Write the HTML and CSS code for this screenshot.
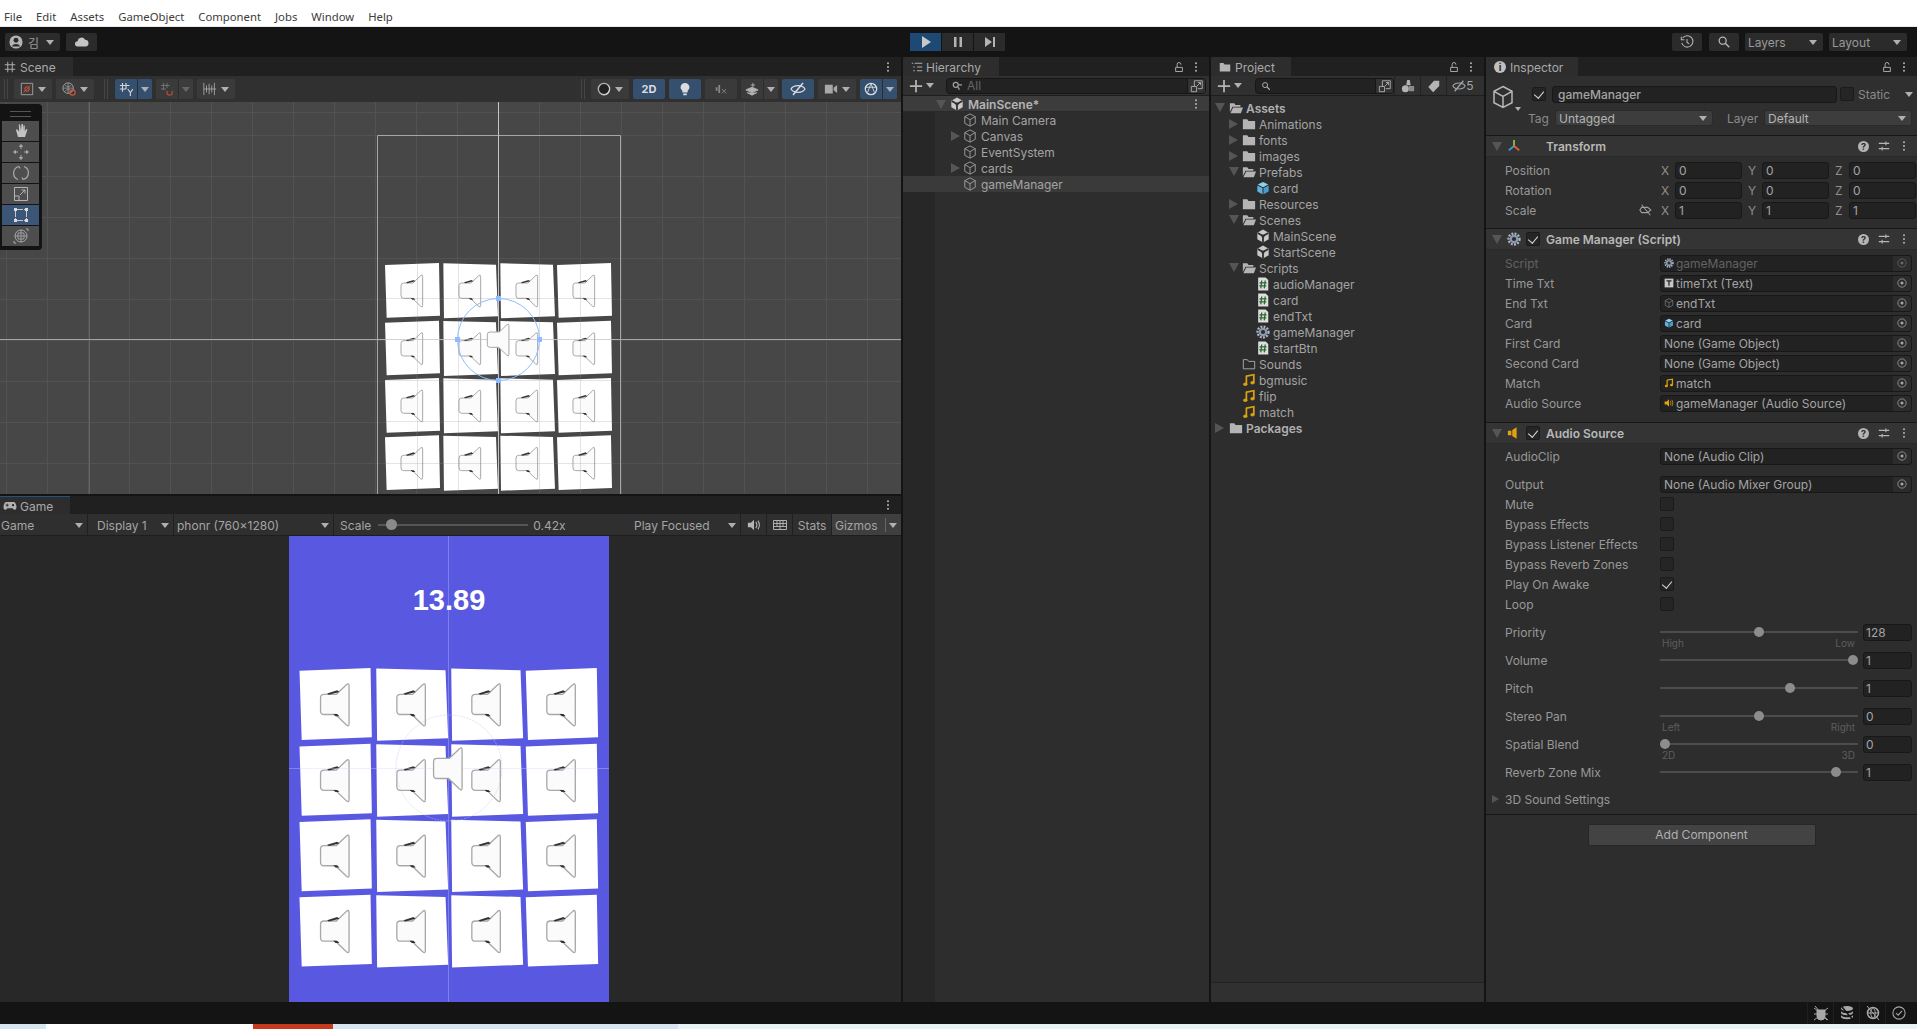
FILE: index.html
```html
<!DOCTYPE html>
<html lang="en">
<head>
  <meta charset="UTF-8">
  <title>Unity Editor</title>
  <link rel="stylesheet" href="styles.css">
</head>
<body>

  <!-- Icons used all over the editor -->
  <svg class="sprite" width="0" height="0">
    <symbol id="i-cube" viewBox="0 0 16 16"><path d="M8 1 14 4.2V11.8L8 15 2 11.8V4.2ZM2 4.2 8 7.6 14 4.2M8 7.6V15" fill="none" stroke="currentColor" stroke-width="1"/></symbol>
    <symbol id="i-prefab" viewBox="0 0 16 16"><path d="M8 1 14 4 8 7 2 4Z" fill="#8ed0ee"/><path d="M1.5 5 7.4 8V15L1.5 12Z" fill="#5fb2dd"/><path d="M14.500 5 8.600 8V15L14.500 12Z" fill="#4a9bc8"/></symbol>
    <symbol id="i-unity" viewBox="0 0 16 16"><path d="M8 .6 14.500 4.200V11.800L8 15.400 1.500 11.800V4.200Z" fill="#c9c9c9"/><path d="M8 8V15M8 8 2 4.500M8 8 14 4.500" stroke="#2c2c2c" stroke-width="2"/><circle cx="8" cy="8" r="1.800" fill="#2c2c2c"/></symbol>
    <symbol id="i-folder" viewBox="0 0 16 16"><path d="M1 2.500H6L7.500 4.500H15V14H1Z" fill="#b4b4b4"/></symbol>
    <symbol id="i-folder-open" viewBox="0 0 16 16"><path d="M1 2.500H6L7.500 4.500H13V6.500H4L1 12.500Z" fill="#b4b4b4"/><path d="M4.800 7.500H16L13.500 14H1.600Z" fill="#b4b4b4"/></symbol>
    <symbol id="i-folder-line" viewBox="0 0 16 16"><path d="M1.500 3H6L7.500 5H14.500V13.500H1.500Z" fill="none" stroke="#b4b4b4"/></symbol>
    <symbol id="i-note" viewBox="0 0 16 16"><path d="M5 3.500 13.500 2V11" fill="none" stroke="#d9a00c" stroke-width="2"/><path d="M5 3V12.500" stroke="#d9a00c" stroke-width="2"/><ellipse cx="3.800" cy="12.800" rx="2.500" ry="2" fill="#d9a00c"/><ellipse cx="12" cy="11.200" rx="2.500" ry="2" fill="#d9a00c"/></symbol>
    <symbol id="i-script" viewBox="0 0 16 16"><path d="M2.500 .5H11L14 3.500V15.500H2.500Z" fill="#dedede"/><path d="M6.500 4 5.500 13M10.500 4 9.500 13M4 6.800H12M3.800 10.200H11.800" stroke="#2a6b33" stroke-width="1.500"/></symbol>
    <symbol id="i-gear" viewBox="0 0 16 16"><circle cx="8" cy="8" r="6.300" fill="none" stroke="#aeb8c8" stroke-width="2.600" stroke-dasharray="2.200 1.500"/><circle cx="8" cy="8" r="5" fill="#8b98ad"/><circle cx="8" cy="8" r="2.400" fill="#2c2c2c"/></symbol>
    <symbol id="i-kebab" viewBox="0 0 16 16"><circle cx="8" cy="3" r="1.300" fill="#b4b4b4"/><circle cx="8" cy="8" r="1.300" fill="#b4b4b4"/><circle cx="8" cy="13" r="1.300" fill="#b4b4b4"/></symbol>
    <symbol id="i-lock" viewBox="0 0 16 16"><path d="M3.500 8.500H12.500V14H3.500ZM5.500 8.500V4.500A2.500 2.500 0 0 1 10.500 4.500V5" fill="none" stroke="#b4b4b4" stroke-width="1.200"/></symbol>
    <symbol id="i-sliders" viewBox="0 0 16 16"><path d="M1 4.500H15M1 11.500H15M10.500 2V7M5.500 9V14" stroke="#b4b4b4" stroke-width="1.500"/></symbol>
    <symbol id="i-target" viewBox="0 0 16 16"><circle cx="8" cy="8" r="5.500" fill="none" stroke="#a8a8a8"/><circle cx="8" cy="8" r="2" fill="#a8a8a8"/></symbol>
    <symbol id="i-plus" viewBox="0 0 16 16"><path d="M8 1V15M1 8H15" stroke="#b4b4b4" stroke-width="2"/></symbol>
    <symbol id="i-speaker" viewBox="0 0 16 16"><path d="M1 5.500H4.500L8 2V14L4.500 10.500H1Z" fill="currentColor"/><path d="M10 4.500C11.500 6.500 11.500 9.500 10 11.500M12.500 3C14.500 6 14.500 10 12.500 13" fill="none" stroke="currentColor" stroke-width="1.200"/></symbol>
    <symbol id="i-search" viewBox="0 0 16 16"><circle cx="6.500" cy="6.500" r="4" fill="none" stroke="#b4b4b4" stroke-width="1.500"/><path d="M9.500 9.500 14 14" stroke="#b4b4b4" stroke-width="1.700"/></symbol>
    <symbol id="i-popout" viewBox="0 0 16 16"><path d="M5 9V2H14V11H9M1.500 8.500H7.500V14.500H1.500ZM8 8 12 4M9 4H12V7" fill="none" stroke="#b4b4b4"/></symbol>
    <symbol id="i-hidden" viewBox="0 0 16 16"><path d="M1 8C3.500 3.500 12.500 3.500 15 8 12.500 12.500 3.500 12.500 1 8Z" fill="none" stroke="currentColor" stroke-width="1.200"/><path d="M13 2 3 14" stroke="currentColor" stroke-width="1.500"/></symbol>
    <symbol id="i-unlink" viewBox="0 0 16 16"><path d="M3 5H10L13.500 8 10 11H3L1 8ZM3 2 13 14" fill="none" stroke="#a0a0a0" stroke-width="1.200"/></symbol>
    <symbol id="i-cam" viewBox="0 0 16 16"><path d="M1 3H10V13H1ZM11 6.500 15 3.500V12.500L11 9.500Z" fill="#a8a8a8"/></symbol>

    <!-- A card from the scene, drawn in zoomed units -->
    <symbol id="speaker" viewBox="0 0 165 165" overflow="visible">
      <path d="M56 60H84L107 38Q113 33 113 41V127Q113 135 107 130L82 106H56Q48 106 48 98V68Q48 60 56 60Z" fill="#fbfbfb" stroke="#a8a8a8" stroke-width="3"/>
    </symbol>
    <g id="card-a">
      <path d="M0 6 162 0 165 158 5 164Z" fill="#fff"/>
      <use href="#speaker" width="165" height="165"/>
      <path d="M63 58 86 51 91 55 67 61ZM77 105H86L91 110H82Z" fill="#333"/>
    </g>
    <g id="card-b">
      <path d="M1 1 159 5 165 160 3 166Z" fill="#fff"/>
      <use href="#speaker" width="165" height="165"/>
      <path d="M63 58 86 51 91 55 67 61ZM77 105H86L91 110H82Z" fill="#333"/>
    </g>
    <g id="card-row">
      <use href="#card-a"/>
      <use href="#card-b" x="174"/>
      <use href="#card-b" x="345"/>
      <use href="#card-a" x="516"/>
    </g>
    <g id="card-grid">
      <use href="#card-row"/>
      <use href="#card-row" y="173"/>
      <use href="#card-row" y="345"/>
      <use href="#card-row" y="517"/>
    </g>
  </svg>

  <div class="menubar">
    <span>File</span><span>Edit</span><span>Assets</span><span>GameObject</span><span>Component</span><span>Jobs</span><span>Window</span><span>Help</span>
  </div>

  <!-- Main toolbar -->
  <div class="main-toolbar">
    <div class="mt-btn account">
      <svg class="ic14" viewBox="0 0 16 16"><circle cx="8" cy="8" r="7.500" fill="#b4b4b4"/><circle cx="8" cy="6" r="2.800" fill="#2b2b2b"/><path d="M3.500 13C4.500 9.500 11.500 9.500 12.500 13Z" fill="#2b2b2b"/></svg>
      <span class="kr">김</span><i class="arrow-down"></i>
    </div>
    <div class="mt-btn cloud">
      <svg class="ic14" viewBox="0 0 16 16"><path d="M3 13A3 3 0 0 1 3 7 4.500 4.500 0 0 1 11.500 5.500 3.800 3.800 0 0 1 12.500 13Z" fill="#c4c4c4"/></svg>
    </div>
    <div class="play-group">
      <div class="mt-btn play active"><svg class="ic12" viewBox="0 0 12 12"><path d="M2 0 11 6 2 12Z" fill="#c8c8c8"/></svg></div>
      <div class="mt-btn play"><svg class="ic12" viewBox="0 0 12 12"><path d="M2 1H4.500V11H2ZM7.500 1H10V11H7.500Z" fill="#b4b4b4"/></svg></div>
      <div class="mt-btn play"><svg class="ic12" viewBox="0 0 12 12"><path d="M1 1 8 6 1 11ZM9 1H11V11H9Z" fill="#b4b4b4"/></svg></div>
    </div>
    <div class="mt-right">
      <div class="mt-btn icon-btn"><svg class="ic14" viewBox="0 0 16 16"><path d="M3 3.500A6.500 6.500 0 1 1 2 9M8 4.500V8.500L10.500 10M1.500 2V5.500H5" fill="none" stroke="#b4b4b4" stroke-width="1.200"/></svg></div>
      <div class="mt-btn icon-btn"><svg class="ic14"><use href="#i-search"/></svg></div>
      <div class="mt-btn text-btn">Layers<i class="arrow-down"></i></div>
      <div class="mt-btn text-btn">Layout<i class="arrow-down"></i></div>
    </div>
  </div>

  <div class="dock">

    <!-- Scene and Game -->
    <div class="col-views">
      <div class="panel scene-panel">
        <div class="tabbar">
          <div class="tab tab-scene">
            <svg class="ic12" viewBox="0 0 16 16"><path d="M5 1V15M11 1V15M1 5H15M1 11H15" stroke="#b0b0b0" stroke-width="1.300"/></svg>Scene
          </div>
          <svg class="ic12 kebab"><use href="#i-kebab"/></svg>
        </div>
        <div class="scene-toolbar">
          <span class="grip"></span>
          <div class="tb-btn w38"><svg class="ic14" viewBox="0 0 16 16"><path d="M1.500 1.500H14.500V14.500H1.500Z" fill="none" stroke="#a8a8a8"/><path d="M4 12 12 4" stroke="#d0543a"/><circle cx="8" cy="8" r="2.500" fill="none" stroke="#d0543a" stroke-width="1.200"/></svg><i class="arrow-down"></i></div>
          <div class="tb-btn w38"><svg class="ic14" viewBox="0 0 16 16"><circle cx="7" cy="7" r="6" fill="none" stroke="#a8a8a8"/><path d="M1 7H13M7 1V13M3 3C5 6 9 6 11 3M3 11C5 8 9 8 11 11" fill="none" stroke="#a8a8a8" stroke-width=".8"/><circle cx="12" cy="12" r="3" fill="none" stroke="#d0543a" stroke-width="1.300"/></svg><i class="arrow-down"></i></div>
          <span class="grip grip-mid"></span>
          <div class="tb-split on">
            <div class="part-icon"><svg class="ic14" viewBox="0 0 16 16"><path d="M4 1V11M8 1V8M1 4H12M1 8H8M10 8 13 12 16 8M13 12V16" fill="none" stroke="#d4d4d4" stroke-width="1.300"/></svg></div>
            <div class="part-arrow"><i class="arrow-down"></i></div>
          </div>
          <div class="tb-split dim">
            <div class="part-icon"><svg class="ic14" viewBox="0 0 16 16"><path d="M4 1V9M8 1V7M1 4H11M1 8H7" stroke="#777"/><path d="M8 10V12A3 3 0 0 0 14 12V10" fill="none" stroke="#a84d33" stroke-width="1.500"/></svg></div>
            <div class="part-arrow"><i class="arrow-down"></i></div>
          </div>
          <div class="tb-btn w38"><svg class="ic14" viewBox="0 0 16 16"><path d="M1 1V15M4 4V12M7 2V14M10 4V12M13 1V15M1 8H15" stroke="#a8a8a8"/></svg><i class="arrow-down"></i></div>
          <span class="grip grip-right"></span>
          <div class="tb-btn w38 first-right"><svg class="ic14" viewBox="0 0 16 16"><circle cx="8" cy="8" r="6.500" fill="#222" stroke="#b8b8b8" stroke-width="1.500"/><path d="M12 3A6 6 0 0 1 4 14 7 7 0 0 0 12 3Z" fill="#d4d4d4"/></svg><i class="arrow-down"></i></div>
          <div class="tb-btn w32 on btn-2d">2D</div>
          <div class="tb-btn w32 on"><svg class="ic14" viewBox="0 0 16 16"><path d="M8 1A5 5 0 0 1 11 10V12H5V10A5 5 0 0 1 8 1ZM6 13H10V15H6Z" fill="#dcdcdc"/></svg></div>
          <div class="tb-btn w32"><svg class="ic14" viewBox="0 0 16 16"><path d="M2 6H4V10H2ZM5 3.500H7V12.500H5Z" fill="#888"/><path d="M9 8 14 13M14 8 9 13" stroke="#888"/></svg></div>
          <div class="tb-split w37">
            <div class="part-icon"><svg class="ic14" viewBox="0 0 16 16"><path d="M1 9 8 6 15 9 8 12ZM2 12 8 15 14 12M9 1V6M6.500 3.500H11.500" fill="#b4b4b4" stroke="#b4b4b4"/></svg></div>
            <div class="part-arrow"><i class="arrow-down"></i></div>
          </div>
          <div class="tb-btn w32 on eye"><svg class="ic16"><use href="#i-hidden"/></svg></div>
          <div class="tb-btn w38"><svg class="ic14"><use href="#i-cam"/></svg><i class="arrow-down"></i></div>
          <div class="tb-split w37 on">
            <div class="part-icon"><svg class="ic14" viewBox="0 0 16 16"><circle cx="8" cy="8" r="6.500" fill="none" stroke="#dcdcdc" stroke-width="1.500"/><path d="M2 6H14M8 2 4 12M8 2 12 12" fill="none" stroke="#dcdcdc"/></svg></div>
            <div class="part-arrow"><i class="arrow-down"></i></div>
          </div>
        </div>

        <div class="scene-view">
          <svg class="overlay" width="901" height="392">
            <g transform="translate(0 -102)">
              <path d="M89.500 102V494" stroke="#656565"/>
              <path d="M377.500 494V135.500H620.500V494" fill="none" stroke="#a6a6a6"/>
              <path d="M0 339.500H901" stroke="#a4a4a4"/>
              <path d="M498.500 102V494" stroke="#c4c4c4"/>
              <use href="#card-grid" transform="translate(385 263) scale(.3333)"/>
              <path d="M417.500 263V490M458.500 263V490M539.500 263V490M580.500 263V490M385 298.500H612M385 380.500H612M385 421.500H612M385 463.500H612" stroke="#787878" stroke-opacity=".2"/>
              <path d="M377 339.500H620" stroke="#b5b5b5" stroke-opacity=".6"/>
              <circle cx="498.500" cy="339.500" r="41" fill="none" stroke="#8fbcff" stroke-width="1"/>
              <use href="#speaker" x="471.300" y="312" width="55" height="55"/>
              <path d="M496 296H501V301H496ZM496 378H501V383H496ZM455 337H460V342H455ZM537 337H542V342H537Z" fill="#8fbcff"/>
            </g>
          </svg>

          <div class="toolbox">
            <div class="toolbox-grip"></div>
            <div class="tool"><svg class="ic16" viewBox="0 0 16 16"><path d="M3 7 5 14H12L14.500 6.500 13 6 11.800 8.500V2.500L10.500 2.500 10 7.500V1H8.500L8 7.500 7 1.500H5.800L6.200 8.800 4 6Z" fill="#c4c4c4"/></svg></div>
            <div class="tool"><svg class="ic16" viewBox="0 0 16 16"><path d="M8 1V5M8 11V15M1 8H5M11 8H15M8 .5 6.500 2.500H9.500ZM8 15.500 6.500 13.500H9.500ZM.5 8 2.500 6.500V9.500ZM15.500 8 13.500 6.500V9.500Z" fill="#a8a8a8" stroke="#a8a8a8"/></svg></div>
            <div class="tool"><svg class="ic16" viewBox="0 0 16 16"><path d="M6 1.500A6.800 6.800 0 0 0 5 14.500M10 14.500A6.800 6.800 0 0 0 11 1.500M6 1.500 7 3.500M10 14.500 9 12.500" fill="none" stroke="#a8a8a8" stroke-width="1.200"/></svg></div>
            <div class="tool"><svg class="ic16" viewBox="0 0 16 16"><path d="M1.500 1.500H14.500V14.500H1.500ZM1.500 10H6V14.500M7 9 12 4M8.500 4H12V7.500" fill="none" stroke="#b4b4b4"/></svg></div>
            <div class="tool on"><svg class="ic16" viewBox="0 0 16 16"><path d="M3 2.500H13M3 13.500H13M2.500 3V13M13.500 3V13" stroke="#c8c8c8" stroke-dasharray="7 1"/><path d="M1 1H4V4H1ZM12 1H15V4H12ZM1 12H4V15H1ZM12 12H15V15H12Z" fill="#dcdcdc"/></svg></div>
            <div class="tool"><svg class="ic16" viewBox="0 0 16 16"><circle cx="8" cy="8" r="6" fill="none" stroke="#a8a8a8"/><path d="M8 2V14M2 8H14M5 5H11V11H5Z" fill="none" stroke="#a8a8a8" stroke-width=".9"/><path d="M13 1H15V3M3 15H1V13" fill="none" stroke="#a8a8a8"/></svg></div>
          </div>
        </div>
      </div>

      <div class="panel game-panel">
        <div class="tabbar game-tabbar">
          <div class="tab tab-game">
            <svg class="ic14" viewBox="0 0 16 16"><path d="M4 3.500H12C15 3.500 16 9 15 11.500 14 13 12.500 12.500 11 10.500H5C3.500 12.500 2 13 1 11.500 0 9 1 3.500 4 3.500Z" fill="#b0b0b0"/><path d="M3 7H6.500M4.800 5.300V8.700" stroke="#222"/><circle cx="11.500" cy="7" r="1.200" fill="#222"/></svg>Game
          </div>
          <svg class="ic12 kebab"><use href="#i-kebab"/></svg>
        </div>
        <div class="game-toolbar">
          <div class="gt-item gt-game">Game<i class="arrow-down"></i></div>
          <div class="gt-item gt-display">Display 1<i class="arrow-down"></i></div>
          <div class="gt-item gt-res">phonr (760x1280)<i class="arrow-down"></i></div>
          <div class="gt-item gt-scale">
            Scale
            <div class="mini-slider"><span class="mini-thumb"></span></div>
            <span>0.42x</span>
          </div>
          <div class="gt-item gt-focus">Play Focused<i class="arrow-down"></i></div>
          <div class="gt-item gt-icon"><svg class="ic14 speaker-ic"><use href="#i-speaker"/></svg></div>
          <div class="gt-item gt-icon"><svg class="ic16" viewBox="0 0 16 16"><path d="M1.500 3.500H14.500V12.500H1.500ZM1.500 6.500H14.500M1.500 9.500H14.500M5 3.500V9.500M8 3.500V12.500M11 3.500V9.500" fill="none" stroke="#b0b0b0"/></svg></div>
          <div class="gt-item gt-stats">Stats</div>
          <div class="gt-item gt-gizmos">Gizmos<span class="gizmo-sep"></span><i class="arrow-down"></i></div>
        </div>
        <div class="game-view">
          <div class="game-screen">
            <svg class="overlay" width="320" height="466">
              <g transform="translate(-289 -536)">
                <path d="M448.500 536V1002" stroke="#7c80ec"/>
                <use href="#card-grid" transform="translate(299.500 668) scale(.4385)"/>
                <path d="M289 768.500H609" stroke="#cfd8fa" stroke-opacity=".35"/>
                <circle cx="449" cy="768" r="53" fill="none" stroke="#b9c9f5" stroke-opacity=".5" stroke-dasharray="2 1"/>
                <use href="#speaker" x="412.500" y="732" width="72.400" height="72.400"/>
              </g>
            </svg>
            <div class="timer">13.89</div>
          </div>
        </div>
      </div>
    </div>

    <!-- Hierarchy -->
    <div class="panel hierarchy">
      <div class="tabbar">
        <div class="tab tab-hierarchy">
          <svg class="ic12" viewBox="0 0 16 16"><path d="M5 3H15M8 8H15M8 13H15M1 3H3M3 8H5M3 13H5" stroke="#b0b0b0" stroke-width="1.400"/></svg>Hierarchy
        </div>
        <svg class="ic12 lock"><use href="#i-lock"/></svg>
        <svg class="ic12 kebab-tight"><use href="#i-kebab"/></svg>
      </div>
      <div class="search-bar">
        <svg class="ic14 plus"><use href="#i-plus"/></svg><i class="arrow-down"></i>
        <div class="search-field hier-search">
          <svg class="ic10" viewBox="0 0 16 16"><circle cx="6" cy="6" r="4" fill="none" stroke="#a0a0a0" stroke-width="2"/><path d="M9 9 12 14M11 6H16" stroke="#a0a0a0" stroke-width="2"/></svg>
          <span class="search-all">All</span>
          <span class="search-end"><svg class="ic14"><use href="#i-popout"/></svg></span>
        </div>
      </div>
      <div class="hier-body">
        <div class="hier-scene">
          <i class="tree-down"></i>
          <svg class="ic14"><use href="#i-unity"/></svg>
          <span>MainScene*</span>
          <svg class="ic12 row-kebab"><use href="#i-kebab"/></svg>
        </div>
        <div class="hier-row"><svg class="ic14"><use href="#i-cube"/></svg>Main Camera</div>
        <div class="hier-row"><i class="tree-right"></i><svg class="ic14"><use href="#i-cube"/></svg>Canvas</div>
        <div class="hier-row"><svg class="ic14"><use href="#i-cube"/></svg>EventSystem</div>
        <div class="hier-row"><i class="tree-right"></i><svg class="ic14"><use href="#i-cube"/></svg>cards</div>
        <div class="hier-row selected"><svg class="ic14"><use href="#i-cube"/></svg>gameManager</div>
      </div>
    </div>

    <!-- Project -->
    <div class="panel project">
      <div class="tabbar">
        <div class="tab tab-project">
          <svg class="ic12"><use href="#i-folder"/></svg>Project
        </div>
        <svg class="ic12 lock"><use href="#i-lock"/></svg>
        <svg class="ic12 kebab-tight"><use href="#i-kebab"/></svg>
      </div>
      <div class="search-bar">
        <svg class="ic14 plus"><use href="#i-plus"/></svg><i class="arrow-down"></i>
        <div class="search-field proj-search">
          <svg class="ic10"><use href="#i-search"/></svg>
          <span class="search-end"><svg class="ic14"><use href="#i-popout"/></svg></span>
        </div>
        <div class="proj-tool"><svg class="ic14" viewBox="0 0 16 16"><path d="M7 1H10L11 7H6Z" fill="#b4b4b4"/><circle cx="5" cy="11" r="4" fill="#b4b4b4"/><path d="M9 8H15V14H9Z" fill="#8a8a8a"/></svg></div>
        <div class="proj-tool"><svg class="ic14" viewBox="0 0 16 16"><path d="M8 2H14V8L7 15 1.500 9Z" fill="#b4b4b4"/></svg></div>
        <div class="proj-tool proj-hidden"><svg class="ic14"><use href="#i-hidden"/></svg>5</div>
      </div>
      <div class="tree">
        <div class="tree-row bold lvl0"><i class="tree-down"></i><svg class="ic14"><use href="#i-folder-open"/></svg>Assets</div>
        <div class="tree-row lvl1"><i class="tree-right"></i><svg class="ic14"><use href="#i-folder"/></svg>Animations</div>
        <div class="tree-row lvl1"><i class="tree-right"></i><svg class="ic14"><use href="#i-folder"/></svg>fonts</div>
        <div class="tree-row lvl1"><i class="tree-right"></i><svg class="ic14"><use href="#i-folder"/></svg>images</div>
        <div class="tree-row lvl1"><i class="tree-down"></i><svg class="ic14"><use href="#i-folder-open"/></svg>Prefabs</div>
        <div class="tree-row lvl2"><svg class="ic14"><use href="#i-prefab"/></svg>card</div>
        <div class="tree-row lvl1"><i class="tree-right"></i><svg class="ic14"><use href="#i-folder"/></svg>Resources</div>
        <div class="tree-row lvl1"><i class="tree-down"></i><svg class="ic14"><use href="#i-folder-open"/></svg>Scenes</div>
        <div class="tree-row lvl2"><svg class="ic14"><use href="#i-unity"/></svg>MainScene</div>
        <div class="tree-row lvl2"><svg class="ic14"><use href="#i-unity"/></svg>StartScene</div>
        <div class="tree-row lvl1"><i class="tree-down"></i><svg class="ic14"><use href="#i-folder-open"/></svg>Scripts</div>
        <div class="tree-row lvl2"><svg class="ic14"><use href="#i-script"/></svg>audioManager</div>
        <div class="tree-row lvl2"><svg class="ic14"><use href="#i-script"/></svg>card</div>
        <div class="tree-row lvl2"><svg class="ic14"><use href="#i-script"/></svg>endTxt</div>
        <div class="tree-row lvl2"><svg class="ic14"><use href="#i-gear"/></svg>gameManager</div>
        <div class="tree-row lvl2"><svg class="ic14"><use href="#i-script"/></svg>startBtn</div>
        <div class="tree-row lvl1"><svg class="ic14"><use href="#i-folder-line"/></svg>Sounds</div>
        <div class="tree-row lvl1"><svg class="ic14"><use href="#i-note"/></svg>bgmusic</div>
        <div class="tree-row lvl1"><svg class="ic14"><use href="#i-note"/></svg>flip</div>
        <div class="tree-row lvl1"><svg class="ic14"><use href="#i-note"/></svg>match</div>
        <div class="tree-row bold lvl0"><i class="tree-right"></i><svg class="ic14"><use href="#i-folder"/></svg>Packages</div>
      </div>
      <div class="project-footer"></div>
    </div>

    <!-- Inspector -->
    <div class="panel inspector">
      <div class="tabbar">
        <div class="tab tab-inspector">
          <span class="info-badge">i</span>Inspector
        </div>
        <svg class="ic12 lock"><use href="#i-lock"/></svg>
        <svg class="ic12 kebab-tight"><use href="#i-kebab"/></svg>
      </div>

      <div class="go-header">
        <svg class="go-cube"><use href="#i-cube"/></svg>
        <i class="arrow-down go-arrow"></i>
        <div class="go-line">
          <span class="check on"></span>
          <div class="field go-name">gameManager</div>
          <span class="check"></span>
          <span class="go-static">Static</span>
          <i class="arrow-down"></i>
        </div>
        <div class="go-line go-line2">
          <span class="go-label">Tag</span>
          <div class="dropdown go-tag">Untagged<i class="arrow-down"></i></div>
          <span class="go-label go-layer">Layer</span>
          <div class="dropdown go-layerval">Default<i class="arrow-down"></i></div>
        </div>
      </div>

      <div class="section">
        <div class="section-head">
          <i class="tree-down"></i>
          <svg class="ic14 sec-icon" viewBox="0 0 16 16"><path d="M8 1V8" stroke="#8ec63f" stroke-width="2"/><path d="M8 8 2 13" stroke="#3f9bd6" stroke-width="2"/><path d="M8 8 14 13" stroke="#e0633a" stroke-width="2"/></svg>
          <span class="sec-check-gap"></span>
          <span class="sec-title">Transform</span>
          <span class="help">?</span>
          <svg class="ic12 sec-slider"><use href="#i-sliders"/></svg>
          <svg class="ic12 sec-kebab"><use href="#i-kebab"/></svg>
        </div>
        <div class="section-body transform-body">
          <div class="row">
            <span class="label">Position</span>
            <div class="vec"><span>X</span><div class="field">0</div><span>Y</span><div class="field">0</div><span>Z</span><div class="field">0</div></div>
          </div>
          <div class="row">
            <span class="label">Rotation</span>
            <div class="vec"><span>X</span><div class="field">0</div><span>Y</span><div class="field">0</div><span>Z</span><div class="field">0</div></div>
          </div>
          <div class="row">
            <span class="label">Scale</span>
            <svg class="ic14 unlink"><use href="#i-unlink"/></svg>
            <div class="vec"><span>X</span><div class="field">1</div><span>Y</span><div class="field">1</div><span>Z</span><div class="field">1</div></div>
          </div>
        </div>
      </div>

      <div class="section">
        <div class="section-head">
          <i class="tree-down"></i>
          <svg class="ic14 sec-icon"><use href="#i-gear"/></svg>
          <span class="check on"></span>
          <span class="sec-title">Game Manager (Script)</span>
          <span class="help">?</span>
          <svg class="ic12 sec-slider"><use href="#i-sliders"/></svg>
          <svg class="ic12 sec-kebab"><use href="#i-kebab"/></svg>
        </div>
        <div class="section-body script-body">
          <div class="row muted">
            <span class="label">Script</span>
            <div class="objfield"><svg class="ic10"><use href="#i-gear"/></svg><span>gameManager</span><b class="pick"><svg class="ic12"><use href="#i-target"/></svg></b></div>
          </div>
          <div class="row">
            <span class="label">Time Txt</span>
            <div class="objfield"><svg class="ic10" viewBox="0 0 16 16"><path d="M1 1H15V15H1Z" fill="#c8c8c8"/><path d="M4 4.500H12M8 4.500V12.500" stroke="#222" stroke-width="2"/></svg><span>timeTxt (Text)</span><b class="pick"><svg class="ic12"><use href="#i-target"/></svg></b></div>
          </div>
          <div class="row">
            <span class="label">End Txt</span>
            <div class="objfield"><svg class="ic10 cube-dim"><use href="#i-cube"/></svg><span>endTxt</span><b class="pick"><svg class="ic12"><use href="#i-target"/></svg></b></div>
          </div>
          <div class="row">
            <span class="label">Card</span>
            <div class="objfield"><svg class="ic10"><use href="#i-prefab"/></svg><span>card</span><b class="pick"><svg class="ic12"><use href="#i-target"/></svg></b></div>
          </div>
          <div class="row">
            <span class="label">First Card</span>
            <div class="objfield"><span>None (Game Object)</span><b class="pick"><svg class="ic12"><use href="#i-target"/></svg></b></div>
          </div>
          <div class="row">
            <span class="label">Second Card</span>
            <div class="objfield"><span>None (Game Object)</span><b class="pick"><svg class="ic12"><use href="#i-target"/></svg></b></div>
          </div>
          <div class="row">
            <span class="label">Match</span>
            <div class="objfield"><svg class="ic10"><use href="#i-note"/></svg><span>match</span><b class="pick"><svg class="ic12"><use href="#i-target"/></svg></b></div>
          </div>
          <div class="row">
            <span class="label">Audio Source</span>
            <div class="objfield"><svg class="ic10 audio-ic"><use href="#i-speaker"/></svg><span>gameManager (Audio Source)</span><b class="pick"><svg class="ic12"><use href="#i-target"/></svg></b></div>
          </div>
        </div>
      </div>

      <div class="section">
        <div class="section-head">
          <i class="tree-down"></i>
          <svg class="ic14 sec-icon" viewBox="0 0 16 16"><path d="M1 5.500H5V10.500H1ZM6 4.500 11 1.500V14.500L6 11.500Z" fill="#e0a30e"/></svg>
          <span class="check on"></span>
          <span class="sec-title">Audio Source</span>
          <span class="help">?</span>
          <svg class="ic12 sec-slider"><use href="#i-sliders"/></svg>
          <svg class="ic12 sec-kebab"><use href="#i-kebab"/></svg>
        </div>
        <div class="section-body audio-body">
          <div class="row row-clip">
            <span class="label">AudioClip</span>
            <div class="objfield"><span>None (Audio Clip)</span><b class="pick"><svg class="ic12"><use href="#i-target"/></svg></b></div>
          </div>
          <div class="row">
            <span class="label">Output</span>
            <div class="objfield"><span>None (Audio Mixer Group)</span><b class="pick"><svg class="ic12"><use href="#i-target"/></svg></b></div>
          </div>
          <div class="row"><span class="label">Mute</span><span class="check"></span></div>
          <div class="row"><span class="label">Bypass Effects</span><span class="check"></span></div>
          <div class="row"><span class="label">Bypass Listener Effects</span><span class="check"></span></div>
          <div class="row"><span class="label">Bypass Reverb Zones</span><span class="check"></span></div>
          <div class="row"><span class="label">Play On Awake</span><span class="check on"></span></div>
          <div class="row"><span class="label">Loop</span><span class="check"></span></div>

          <div class="sliders">
            <div class="slider-row">
              <span class="label">Priority</span>
              <div class="slider"><div class="track"><span class="thumb" style="left:50%"></span></div><div class="slider-ends"><span>High</span><span>Low</span></div></div>
              <div class="field num">128</div>
            </div>
            <div class="slider-row">
              <span class="label">Volume</span>
              <div class="slider"><div class="track"><span class="thumb" style="left:97.500%"></span></div></div>
              <div class="field num">1</div>
            </div>
            <div class="slider-row">
              <span class="label">Pitch</span>
              <div class="slider"><div class="track"><span class="thumb" style="left:65.500%"></span></div></div>
              <div class="field num">1</div>
            </div>
            <div class="slider-row">
              <span class="label">Stereo Pan</span>
              <div class="slider"><div class="track"><span class="thumb" style="left:50%"></span></div><div class="slider-ends"><span>Left</span><span>Right</span></div></div>
              <div class="field num">0</div>
            </div>
            <div class="slider-row">
              <span class="label">Spatial Blend</span>
              <div class="slider"><div class="track"><span class="thumb" style="left:2.500%"></span></div><div class="slider-ends"><span>2D</span><span>3D</span></div></div>
              <div class="field num">0</div>
            </div>
            <div class="slider-row">
              <span class="label">Reverb Zone Mix</span>
              <div class="slider"><div class="track"><span class="thumb" style="left:89%"></span></div></div>
              <div class="field num">1</div>
            </div>
          </div>
          <div class="foldout"><i class="tree-right"></i>3D Sound Settings</div>
        </div>
      </div>

      <div class="add-wrap">
        <div class="add-btn">Add Component</div>
      </div>
    </div>
  </div>

  <!-- Status bar -->
  <div class="statusbar">
    <span class="st-icon"><svg class="ic16" viewBox="0 0 16 16"><path d="M4 5H12V11A4 4 0 0 1 4 11ZM1 3 5 6M15 3 11 6M1 9H4M12 9H15M1 15 5 12M15 15 11 12M2 1 14 15" fill="#a8a8a8" stroke="#a8a8a8"/></svg></span>
    <span class="st-icon"><svg class="ic16" viewBox="0 0 16 16"><ellipse cx="8" cy="3.500" rx="6" ry="2.500" fill="#a8a8a8"/><path d="M2 6C3 9 13 9 14 6V8C13 11 3 11 2 8ZM2 10C3 13 13 13 14 10V12C13 15 3 15 2 12Z" fill="#a8a8a8"/><path d="M3 2 14 15" stroke="#141414" stroke-width="1.500"/></svg></span>
    <span class="st-icon"><svg class="ic16" viewBox="0 0 16 16"><circle cx="8" cy="8" r="5.500" fill="none" stroke="#a8a8a8" stroke-width="1.500"/><path d="M2.500 8H13.500M8 2.500C5 6 5 10 8 13.500M8 2.500C11 6 11 10 8 13.500M2 1 14 15" fill="none" stroke="#a8a8a8"/></svg></span>
    <span class="st-icon"><svg class="ic14" viewBox="0 0 16 16"><circle cx="8" cy="8" r="7" fill="none" stroke="#a8a8a8" stroke-width="1.200"/><path d="M4.500 8 7 10.500 11.500 5.500" fill="none" stroke="#a8a8a8" stroke-width="1.200"/></svg></span>
  </div>

  <!-- The desktop behind the window, only a sliver shows -->
  <div class="desktop">
    <span class="d-blue"></span><span class="d-white"></span><span class="d-red"></span><span class="d-rest"></span><span class="d-pale"></span>
  </div>

</body>
</html>
```

FILE: styles.css
```css
* {
  box-sizing: border-box;
}

body {
  margin: 0;
  width: 1917px;
  height: 1029px;
  overflow: hidden;
  display: flex;
  flex-direction: column;
  background-color: #141414;
  color: #a9a9a9;
  font-family: "Inter", "Liberation Sans", sans-serif;
  font-size: 12px;
}

i {
  font-style: normal;
}

svg {
  flex-shrink: 0;
  display: block;
}

.sprite {
  position: absolute;
}

.ic10 { width: 10px; height: 10px; }
.ic12 { width: 12px; height: 12px; }
.ic14 { width: 14px; height: 14px; }
.ic16 { width: 16px; height: 16px; }

/* Triangles */
.arrow-down {
  display: inline-block;
  width: 0;
  height: 0;
  border-left: 4px solid transparent;
  border-right: 4px solid transparent;
  border-top: 5px solid #b0b0b0;
}

.tree-down,
.tree-right {
  display: inline-block;
  width: 0;
  height: 0;
  flex-shrink: 0;
}

.tree-down {
  border-left: 5px solid transparent;
  border-right: 5px solid transparent;
  border-top: 9px solid #555;
}

.tree-right {
  border-top: 5px solid transparent;
  border-bottom: 5px solid transparent;
  border-left: 9px solid #555;
}

/* Windows menu */
.menubar {
  height: 27px;
  flex-shrink: 0;
  display: flex;
  align-items: flex-end;
  gap: 14px;
  padding: 0 0 2px 4px;
  background-color: #fff;
  border-bottom: 1px solid #e8e8e8;
  color: #3c3c3c;
  font-family: "Noto Sans", sans-serif;
  font-size: 11.300px;
}

/* Main toolbar */
.main-toolbar {
  height: 30px;
  flex-shrink: 0;
  display: flex;
  align-items: flex-start;
  padding: 6px 10px 0 5px;
  position: relative;
}

.mt-btn {
  height: 18px;
  display: flex;
  align-items: center;
  justify-content: center;
  background-color: #2b2b2b;
  border-radius: 2px;
}

.account {
  width: 55px;
  justify-content: flex-start;
  padding-left: 4px;
  gap: 5px;
}

.account .arrow-down {
  margin-left: 2px;
}

.kr {
  font-family: "Noto Sans CJK KR", sans-serif;
  font-size: 12px;
  color: #999;
}

.cloud {
  width: 31px;
  margin-left: 6px;
}

.play-group {
  display: flex;
  gap: 1px;
  margin-left: 813px;
}

.play {
  width: 31px;
  border-radius: 0;
}

.play.active {
  background-color: #1d4a74;
}

.mt-right {
  margin-left: auto;
  display: flex;
  gap: 6px;
}

.icon-btn {
  width: 30px;
}

.icon-btn + .icon-btn {
  margin-right: 0;
  margin-left: 1px;
}

.text-btn {
  width: 78px;
  justify-content: space-between;
  padding: 0 6px 0 3px;
  color: #999;
}

/* Docked panels */
.dock {
  height: 945px;
  flex-shrink: 0;
  display: flex;
  gap: 2px;
}

.col-views {
  width: 901px;
  flex-shrink: 0;
  display: flex;
  flex-direction: column;
  gap: 2px;
}

.panel {
  display: flex;
  flex-direction: column;
  background-color: #2d2d2d;
}

.tabbar {
  height: 19px;
  flex-shrink: 0;
  display: flex;
  align-items: center;
  background-color: #202020;
}

.tab {
  height: 19px;
  display: flex;
  align-items: center;
  gap: 4px;
  padding: 1px 0 0 8px;
  background-color: #2d2d2d;
  margin-right: auto;
  font-size: 12px;
}

.tab-scene { width: 73px; padding-left: 4px; background-color: #2b2b2b; }
.tab-game { width: 70px; padding-left: 3px; gap: 3px; border-top: 1px solid #24517f; }
.tab-hierarchy { width: 96px; gap: 3px; }
.tab-project { width: 80px; }
.tab-inspector { width: 92px; }

.kebab {
  margin-right: 7px;
}

.lock {
  margin-right: 5px;
}

.kebab-tight {
  margin-right: 7px;
}

.info-badge {
  width: 12px;
  height: 12px;
  border-radius: 50%;
  background-color: #c0c0c0;
  color: #2a2a2a;
  font-size: 10px;
  font-weight: 700;
  line-height: 12px;
  text-align: center;
}

/* Scene */
.scene-panel {
  height: 437px;
}

.scene-toolbar {
  height: 26px;
  flex-shrink: 0;
  display: flex;
  align-items: center;
  gap: 4px;
  padding: 0 4px;
  background-color: #303030;
}

.grip {
  width: 4px;
  height: 20px;
  margin-right: 2px;
  border-left: 1px solid #454545;
  border-right: 1px solid #454545;
}

.grip-mid {
  margin: 0 3px 0 6px;
}

.grip-right {
  margin-left: auto;
  margin-right: 2px;
}

.tb-btn,
.tb-split {
  height: 20px;
  display: flex;
  align-items: center;
  justify-content: center;
  gap: 4px;
  background-color: #3a3a3a;
  border-radius: 2px;
}

.w38 { width: 38px; }
.w37 { width: 37px; }
.w32 { width: 32px; }

.tb-split {
  width: 37px;
  gap: 0;
  overflow: hidden;
}

.part-icon {
  width: 22px;
  height: 20px;
  display: flex;
  align-items: center;
  justify-content: center;
}

.part-arrow {
  width: 15px;
  height: 20px;
  display: flex;
  align-items: center;
  justify-content: center;
  background-color: #3c3c3c;
  border-left: 1px solid #2c2c2c;
}

.tb-btn.on,
.tb-split.on {
  background-color: #34506e;
}

.tb-split.on .part-arrow {
  background-color: #34506e;
}

.tb-split.dim .part-arrow .arrow-down {
  border-top-color: #666;
}

.btn-2d {
  color: #dcdcdc;
  font-weight: 700;
  font-size: 11px;
}

.eye {
  color: #dcdcdc;
}

.scene-view {
  flex: 1;
  position: relative;
  overflow: hidden;
  background-color: #474747;
  background-image:
    repeating-linear-gradient(to right, #525252 0, #525252 1px, transparent 1px, transparent 41px),
    repeating-linear-gradient(to bottom, #525252 0, #525252 1px, transparent 1px, transparent 41px);
  background-position: 6px 0, 0 33px;
}

.overlay {
  position: absolute;
  left: 0;
  top: 0;
}

.toolbox {
  position: absolute;
  left: 0;
  top: 2px;
  width: 42px;
  height: 146px;
  padding: 0 3px 0 2px;
  background-color: #131313;
  border-radius: 0 4px 4px 0;
}

.toolbox-grip {
  height: 17px;
  margin: 0 8px;
  padding-top: 7px;
  border-bottom: 0;
  position: relative;
}

.toolbox-grip::before {
  content: "";
  display: block;
  height: 4px;
  border-top: 1px solid #555;
  border-bottom: 1px solid #555;
}

.tool {
  height: 20px;
  margin-bottom: 1px;
  display: flex;
  align-items: center;
  justify-content: center;
  background-color: #4e4e4e;
}

.tool.on {
  background-color: #3b5677;
}

/* Game */
.game-panel {
  flex: 1;
}

.game-tabbar {
  height: 18px;
}

.game-tabbar .tab {
  height: 18px;
}

.game-toolbar {
  height: 22px;
  flex-shrink: 0;
  display: flex;
  background-color: #2f2f2f;
  border-bottom: 1px solid #1e1e1e;
}

.gt-item {
  height: 21px;
  display: flex;
  align-items: center;
  justify-content: space-between;
  padding: 1px 4px 0 3px;
  border-right: 1px solid #202020;
  color: #a4a4a4;
}

.gt-game { width: 88px; padding-left: 1px; }
.gt-display { width: 86px; padding-left: 9px; }
.gt-res { width: 160px; }
.gt-scale { width: 300px; padding-left: 6px; padding-right: 0; border-right: 0; justify-content: flex-start; }
.gt-focus { width: 107px; padding-left: 0; margin-left: 0; }
.gt-icon { width: 26px; justify-content: center; padding: 0; }
.gt-stats { width: 39px; justify-content: center; padding: 1px 0 0; }
.gt-gizmos { flex: 1; background-color: #3f3f3f; border-right: 0; }

.mini-slider {
  width: 150px;
  height: 2px;
  margin: 0 5px 0 7px;
  background-color: #555;
  position: relative;
}

.mini-thumb {
  position: absolute;
  left: 8px;
  top: -5px;
  width: 11px;
  height: 11px;
  border-radius: 50%;
  background-color: #8a8a8a;
}

.gizmo-sep {
  width: 1px;
  height: 14px;
  margin-left: 5px;
  background-color: #666;
}

.speaker-ic {
  color: #b4b4b4;
}

.game-view {
  flex: 1;
  padding-left: 289px;
  background-color: #282828;
}

.game-screen {
  width: 320px;
  height: 100%;
  position: relative;
  background-color: #5858e0;
}

.timer {
  position: relative;
  padding-top: 48px;
  color: #fff;
  font-family: "Liberation Sans", sans-serif;
  font-size: 29px;
  font-weight: 700;
  line-height: 33px;
  text-align: center;
}

/* Hierarchy */
.hierarchy {
  width: 306px;
  flex-shrink: 0;
}

.search-bar {
  height: 20px;
  flex-shrink: 0;
  display: flex;
  align-items: center;
  padding-left: 6px;
  background-color: #303030;
  border-bottom: 1px solid #1e1e1e;
}

.plus {
  margin-right: 3px;
}

.search-field {
  height: 16px;
  display: flex;
  align-items: center;
  padding-left: 5px;
  background-color: #222;
  border: 1px solid #161616;
  border-radius: 4px;
}

.hier-search {
  width: 260px;
  margin-left: 12px;
}

.proj-search {
  width: 139px;
  margin-left: 13px;
}

.search-all {
  margin-left: 5px;
  color: #666;
}

.search-end {
  margin-left: auto;
  width: 18px;
  height: 14px;
  display: flex;
  align-items: center;
  justify-content: center;
  background-color: #333;
  border-left: 1px solid #161616;
  border-radius: 0 3px 3px 0;
}

.hier-body {
  flex: 1;
  background: linear-gradient(to right, #272727 32px, #2d2d2d 32px);
}

.hier-scene {
  height: 16px;
  display: flex;
  align-items: center;
  padding: 1px 0 0 33px;
  gap: 4px;
  background-color: #3c3c3c;
  border-bottom: 1px solid #2a2a2a;
  color: #b4b4b4;
  font-weight: 600;
}

.row-kebab {
  margin-left: auto;
  margin-right: 7px;
}

.hier-row {
  height: 16px;
  display: flex;
  align-items: center;
  padding-left: 60px;
  position: relative;
  color: #a4a4a4;
}

.hier-row svg {
  margin-right: 4px;
}

.hier-row .tree-right {
  position: absolute;
  left: 48px;
  top: 3px;
}

.hier-row.selected {
  background-color: #3a3a3a;
}

/* Project */
.project {
  width: 273px;
  flex-shrink: 0;
}

.proj-tool {
  height: 19px;
  width: 26px;
  display: flex;
  align-items: center;
  justify-content: center;
  border-left: 1px solid #222;
}

.proj-tool:first-of-type {
  margin-left: 3px;
}

.proj-hidden {
  width: 33px;
  color: #a4a4a4;
  gap: 0;
}

.tree {
  flex: 1;
  padding-top: 4px;
}

.tree-row {
  height: 16px;
  display: flex;
  align-items: center;
  position: relative;
  color: #a4a4a4;
}

.tree-row svg {
  margin-right: 3px;
}

.tree-row .tree-down,
.tree-row .tree-right {
  position: absolute;
  top: 3px;
}

.lvl0 { padding-left: 18px; }
.lvl0 > i { left: 4px; }
.lvl1 { padding-left: 31px; }
.lvl1 > i { left: 18px; }
.lvl2 { padding-left: 45px; }

.bold {
  font-weight: 600;
  color: #b0b0b0;
}

.project-footer {
  height: 20px;
  flex-shrink: 0;
  border-top: 1px solid #222;
  background-color: #303030;
}

/* Inspector */
.inspector {
  flex: 1;
  min-width: 0;
}

.go-header {
  height: 59px;
  flex-shrink: 0;
  position: relative;
  padding-top: 9px;
  background-color: #2f2f2f;
}

.go-cube {
  position: absolute;
  left: 5px;
  top: 9px;
  width: 24px;
  height: 24px;
  color: #b8b8b8;
}

.go-arrow {
  position: absolute;
  left: 29px;
  top: 31px;
  border-left-width: 3px;
  border-right-width: 3px;
  border-top-width: 4px;
}

.go-line {
  display: flex;
  align-items: center;
  height: 18px;
  padding-left: 46px;
}

.go-line2 {
  height: 16px;
  margin-top: 7px;
  padding-left: 42px;
}

.go-name {
  width: 285px;
  margin: 0 3px 0 6px;
  padding-left: 3px;
  height: 18px;
  color: #c4c4c4;
  font-weight: 500;
}

.go-static {
  margin-left: 4px;
  color: #8a8a8a;
}

.go-line .go-static + .arrow-down {
  margin-left: 15px;
}

.go-label {
  width: 27px;
  color: #8a8a8a;
}

.dropdown {
  height: 16px;
  display: flex;
  align-items: center;
  justify-content: space-between;
  padding: 0 5px 0 3px;
  background-color: #3d3d3d;
  border: 1px solid #2a2a2a;
  border-radius: 3px;
  color: #b4b4b4;
}

.go-tag { width: 158px; }

.go-layer {
  width: 37px;
  margin-left: 14px;
}

.go-layerval { width: 148px; }

.section {
  border-top: 1px solid #171717;
}

.section-head {
  height: 21px;
  display: flex;
  align-items: center;
  padding-left: 6px;
  background-color: #343434;
  border-bottom: 1px solid #292929;
  position: relative;
}

.sec-icon {
  margin-left: 5px;
}

.section-head .check {
  margin-left: 5px;
}

.sec-check-gap {
  width: 14px;
  margin-left: 5px;
}

.sec-title {
  margin-left: 6px;
  color: #b8b8b8;
  font-weight: 600;
}

.help {
  margin-left: auto;
  width: 11px;
  height: 11px;
  border-radius: 50%;
  background-color: #b4b4b4;
  color: #2d2d2d;
  font-size: 9px;
  font-weight: 700;
  line-height: 11px;
  text-align: center;
}

.sec-slider {
  margin-left: 9px;
}

.sec-kebab {
  margin: 0 7px 0 8px;
}

.section-body {
  padding: 3px 5px 9px 19px;
}

.transform-body {
  padding-bottom: 8px;
}

.audio-body {
  padding: 2px 5px 7px 19px;
}

.row {
  height: 20px;
  display: flex;
  align-items: center;
  color: #a4a4a4;
}

.row-clip {
  margin-bottom: 8px;
}

.label {
  width: 155px;
  flex-shrink: 0;
  color: #989898;
}

.muted .label,
.muted .objfield {
  color: #636363;
}

.unlink {
  margin-left: -21px;
  margin-right: 7px;
}

.vec {
  flex: 1;
  display: flex;
  align-items: center;
  color: #8e8e8e;
}

.vec span {
  width: 15px;
  flex-shrink: 0;
  padding-left: 1px;
}

.vec .field {
  width: 67px;
  margin-right: 5px;
  padding-left: 3px;
}

.vec .field:last-child {
  margin-right: 0;
}

.field {
  height: 17px;
  display: flex;
  align-items: center;
  padding-left: 5px;
  background-color: #222;
  border: 1px solid #181818;
  border-radius: 3px;
  color: #a4a4a4;
}

.objfield {
  flex: 1;
  height: 17px;
  display: flex;
  align-items: center;
  gap: 2px;
  padding-left: 3px;
  background-color: #222;
  border: 1px solid #181818;
  border-radius: 3px;
  color: #a4a4a4;
}

.pick {
  margin-left: auto;
  width: 18px;
  height: 15px;
  display: flex;
  align-items: center;
  justify-content: center;
  background-color: #2c2c2c;
  border-radius: 0 3px 3px 0;
}

.muted .pick svg {
  opacity: .5;
}

.cube-dim {
  color: #888;
}

.audio-ic {
  color: #e0a30e;
}

.check {
  width: 14px;
  height: 14px;
  flex-shrink: 0;
  position: relative;
  background-color: #252525;
  border: 1px solid #1b1b1b;
  border-radius: 2px;
}

.check.on::after {
  content: "";
  position: absolute;
  left: 3px;
  top: 1px;
  width: 5px;
  height: 8px;
  border-right: 1.500px solid #d4d4d4;
  border-bottom: 1.500px solid #d4d4d4;
  transform: rotate(40deg);
}

.sliders {
  margin-top: 9px;
}

.slider-row {
  height: 28px;
  display: flex;
  align-items: flex-start;
}

.slider-row .label {
  line-height: 20px;
}

.slider {
  width: 198px;
  position: relative;
}

.track {
  height: 2px;
  margin-top: 8px;
  background-color: #4c4c4c;
  position: relative;
}

.thumb {
  position: absolute;
  top: -4px;
  width: 10px;
  height: 10px;
  margin-left: -5px;
  border-radius: 50%;
  background-color: #8c8c8c;
}

.slider-ends {
  display: flex;
  justify-content: space-between;
  padding: 5px 3px 0 2px;
  font-size: 10px;
  line-height: 11px;
  color: #5e5e5e;
}

.num {
  width: 49px;
  margin-left: 5px;
  margin-top: 1px;
  padding-left: 2px;
}

.foldout {
  height: 16px;
  display: flex;
  align-items: center;
  margin-left: -13px;
  gap: 6px;
  color: #989898;
}

.foldout .tree-right {
  border-top-width: 4px;
  border-bottom-width: 4px;
  border-left-width: 7px;
}

.add-wrap {
  border-top: 1px solid #171717;
  padding-top: 9px;
  display: flex;
  justify-content: center;
}

.add-btn {
  width: 228px;
  height: 22px;
  line-height: 20px;
  text-align: center;
  background-color: #434343;
  border: 1px solid #272727;
  border-radius: 2px;
  color: #b0b0b0;
}

/* Status bar */
.statusbar {
  height: 22px;
  flex-shrink: 0;
  display: flex;
  justify-content: flex-end;
  align-items: center;
  padding-right: 6px;
  background-color: #141414;
}

.st-icon {
  width: 26px;
  height: 22px;
  display: flex;
  align-items: center;
  justify-content: center;
  border-left: 1px solid #1f1f1f;
}

.desktop {
  height: 5px;
  flex-shrink: 0;
  display: flex;
}

.d-blue { width: 46px; background-color: #d7e6ee; }
.d-white { width: 207px; background-color: #fff; }
.d-red { width: 80px; background-color: #c63b1f; }
.d-rest { width: 345px; background-color: #d7e6ee; }
.d-pale { flex: 1; background-color: #e9f2f5; }
```
